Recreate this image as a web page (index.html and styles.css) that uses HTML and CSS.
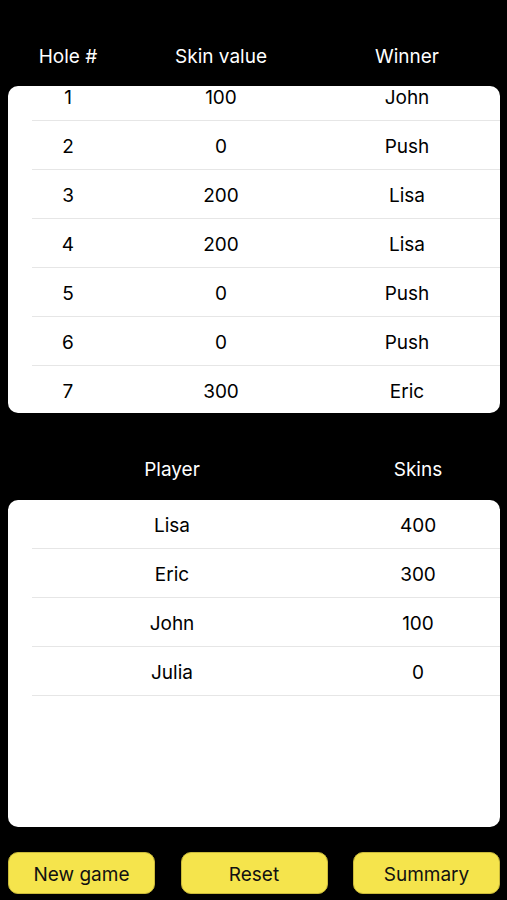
FILE: index.html
```html
<!DOCTYPE html>
<html lang="en-US">
<head>
<title>Skins</title>
<link rel="stylesheet" href="styles.css">
</head>
<body>
<div class="screen">
  <div class="holes-head">
    <span>Hole #</span><span>Skin value</span><span>Winner</span>
  </div>
  <div class="card">
    <div class="holes-list">
      <div class="hole-row"><span>1</span><span>100</span><span>John</span></div>
      <div class="hole-row"><span>2</span><span>0</span><span>Push</span></div>
      <div class="hole-row"><span>3</span><span>200</span><span>Lisa</span></div>
      <div class="hole-row"><span>4</span><span>200</span><span>Lisa</span></div>
      <div class="hole-row"><span>5</span><span>0</span><span>Push</span></div>
      <div class="hole-row"><span>6</span><span>0</span><span>Push</span></div>
      <div class="hole-row last"><span>7</span><span>300</span><span>Eric</span></div>
    </div>
  </div>

  <div class="players-head">
    <span>Player</span><span>Skins</span>
  </div>
  <div class="card">
    <div class="player-row"><span>Lisa</span><span>400</span></div>
    <div class="player-row"><span>Eric</span><span>300</span></div>
    <div class="player-row"><span>John</span><span>100</span></div>
    <div class="player-row"><span>Julia</span><span>0</span></div>
  </div>

  <div class="buttons">
    <button class="btn">New game</button>
    <button class="btn">Reset</button>
    <button class="btn">Summary</button>
  </div>
</div>
</body>
</html>
```

FILE: styles.css
```css
body {
	margin: 0;
	background-color: #000;
	font-family: Inter, "Liberation Sans", sans-serif;
	}
.screen {
	width: 492px;
	padding: 0 7px 0 8px;
	}

/* column layouts */
.holes-head,
.hole-row {
	display: grid;
	grid-template-columns: 120px 186px 1fr;
	text-align: center;
	}
.players-head,
.player-row {
	display: grid;
	grid-template-columns: 328px 1fr;
	text-align: center;
	}

/* white headings over the cards */
.holes-head,
.players-head {
	color: #fff;
	font-size: 19px;
	height: 30px;
	line-height: 32px;
	}
.holes-head {
	padding-top: 41px;
	margin-bottom: 15px;
	}
.players-head {
	margin-top: 41px;
	margin-bottom: 16px;
	}

.card {
	height: 327px;
	background-color: #fff;
	border-radius: 10px;
	overflow: hidden;
	}
.holes-list {
	margin-top: -14px;
	}

.hole-row,
.player-row {
	position: relative;
	box-sizing: border-box;
	height: 49px;
	padding-top: 2px;
	line-height: 47px;
	color: #000;
	font-size: 19px;
	}
/* inset separator line */
.hole-row::after,
.player-row::after {
	content: "";
	position: absolute;
	left: 24px;
	right: 0;
	bottom: 0;
	height: 1px;
	background-color: #e6e6e6;
	}
.hole-row.last::after {
	display: none;
	}

.buttons {
	display: flex;
	justify-content: space-between;
	margin-top: 25px;
	}
.btn {
	width: 147px;
	height: 42px;
	padding: 2px 0 0 0;
	background-color: #f5e44c;
	border: 1px solid #c9b93a;
	border-radius: 10px;
	font-family: Inter, "Liberation Sans", sans-serif;
	font-size: 19px;
	color: #111;
	}
```
